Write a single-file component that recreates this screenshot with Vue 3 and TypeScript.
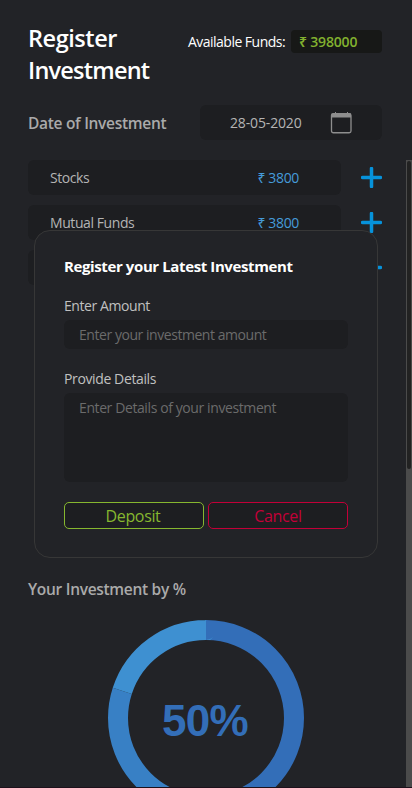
<script setup lang="ts">
interface Holding { id: number; name: string; amount: string }
interface Segment { percent: number; offset: number; color: string }

const holdings: Holding[] = [
  { id: 1, name: 'Stocks', amount: '₹ 3800' },
  { id: 2, name: 'Mutual Funds', amount: '₹ 3800' },
  { id: 3, name: '', amount: '' },
]
const segments: Segment[] = [
  { percent: 50, offset: 0, color: '#336eb8' },
  { percent: 30, offset: 50, color: '#3880c5' },
  { percent: 20, offset: 80, color: '#3e90d1' },
]
</script>

<template>
  <main class="page">
    <header class="top">
      <h1><span class="first-line">Register</span><br />Investment</h1>
      <div class="funds">
        <span class="funds-label">Available Funds:</span>
        <span class="funds-value">₹ 398000</span>
      </div>
    </header>

    <section class="date-row">
      <h2 class="date-title">Date of Investment</h2>
      <div class="date-box">
        <span class="date">28-05-2020</span>
        <svg class="calendar" width="22" height="22" viewBox="0 0 22 22">
          <rect x="1.5" y="1.75" width="19.5" height="19" rx="1.8" fill="none" stroke="#8e8e8e" stroke-width="1.3" />
          <path d="M1.5 1.5h19.5v4h-19.5zM5 0h1v3h-1zM17 0h1v3h-1z" fill="#8e8e8e" />
        </svg>
      </div>
    </section>

    <section class="scroll-area">
      <ul class="holdings">
        <li v-for="item in holdings" :key="item.id">
          <div class="holding">
            <span class="holding-name">{{ item.name }}</span>
            <span class="holding-value">{{ item.amount }}</span>
          </div>
          <svg class="plus" width="21" height="21" viewBox="0 0 21 21">
            <path d="M10.5 1.5v18M1.5 10.5h18" stroke="#0692db" stroke-width="3.5" stroke-linecap="round" />
          </svg>
        </li>
      </ul>
      <h2 class="chart-title">Your Investment by %</h2>
      <div class="chart">
        <svg width="196" height="196" viewBox="0 0 196 196">
          <g transform="rotate(-90 98 98)">
            <circle
              v-for="s in segments" :key="s.offset" cx="98" cy="98" r="88" fill="none" stroke-width="20"
              pathLength="100" :stroke="s.color" :stroke-dasharray="`${s.percent} ${100 - s.percent}`"
              :stroke-dashoffset="-s.offset"
            />
          </g>
        </svg>
        <span class="percent">50%</span>
      </div>
      <div class="track"><div class="thumb"></div></div>
    </section>

    <form class="modal" @submit.prevent>
      <h3>Register your Latest Investment</h3>
      <label for="amount" class="amount-label">Enter Amount</label>
      <input id="amount" placeholder="Enter your investment amount" />
      <label for="details" class="details-label">Provide Details</label>
      <textarea id="details" placeholder="Enter Details of your investment"></textarea>
      <div class="actions">
        <button class="deposit" type="submit">Deposit</button>
        <button class="cancel" type="button">Cancel</button>
      </div>
    </form>
  </main>
</template>

<style>
body { background: #222327; }
</style>

<style scoped>
* { box-sizing: border-box; }
h1, h2, h3, ul { margin: 0; padding: 0; }
.page {
  position: relative; height: 788px; overflow: hidden; background: #222327;
  border-bottom: 1px solid #1d111b; font-family: "Open Sans", "Noto Sans", sans-serif;
  font-size: 14px; color: #b4b4b4; white-space: nowrap;
}
.top { display: flex; justify-content: space-between; height: 105px; padding: 22px 30px 0 28px; }
h1 { font-size: 23.5px; line-height: 32px; font-weight: 600; color: #fff; letter-spacing: -0.78px; }
.first-line { letter-spacing: -0.45px; }
.funds { display: flex; height: 23px; margin-top: 8px; line-height: 23px; }
.funds-label { width: 103px; color: #fff; letter-spacing: -0.52px; }
.funds-value { width: 91px; padding-left: 8px; border-radius: 4px; background: #171817; color: #82b12f; font-weight: 600; letter-spacing: -0.18px; }
.date-row { display: flex; justify-content: space-between; align-items: center; height: 35px; padding: 0 30px 0 28px; }
h2 { font-size: 15.5px; line-height: 21px; font-weight: 600; color: #aaa; letter-spacing: -0.3px; }
.date-title { padding-top: 2px; }
.date-box { display: flex; width: 182px; height: 35px; padding-left: 30px; align-items: center; border-radius: 6px; background: #1d1e21; }
.date { width: 100px; letter-spacing: -0.15px; }
.scroll-area { position: relative; height: 627px; margin-top: 20px; overflow: hidden; }
.holdings { display: flex; flex-direction: column; gap: 10px; padding: 0 30px 0 28px; list-style: none; }
.holdings li { display: flex; justify-content: space-between; }
.holding { display: flex; width: 313px; height: 35px; padding: 0 42px 0 22px; justify-content: space-between; line-height: 36px; border-radius: 6px; background: #1d1e21; }
.holding-name { letter-spacing: -0.42px; }
.holding-value { color: #459bd9; letter-spacing: -0.35px; }
.plus { margin-top: 7px; }
.chart-title { margin: 294px 0 0 28px; }
.chart { display: grid; width: 196px; height: 196px; margin: 20px 0 0 108px; place-items: center; }
.chart > * { grid-area: 1 / 1; }
.percent { margin: 6px 2px 0 0; font: 700 44px/50px "Liberation Sans", Arial, sans-serif; letter-spacing: -0.7px; color: #336eb8; }
.track { position: absolute; top: 0; right: 0; width: 6px; height: 627px; background: #4b4b4b; }
.thumb { width: 4px; height: 308px; margin: 1px 0 0 1px; border-radius: 3px; background: #222; }
.modal { position: absolute; top: 230px; left: 34px; width: 344px; height: 328px; padding: 26px 29px; border: 1px solid #373737; border-radius: 16px; background: #222327; }
h3 { height: 20px; font-size: 15px; line-height: 19px; font-weight: 700; color: #fff; letter-spacing: -0.39px; }
label { display: block; height: 20px; line-height: 20px; color: #c0c0c0; letter-spacing: -0.42px; }
.amount-label { margin-top: 19px; }
.details-label { margin-top: 20px; letter-spacing: -0.38px; }
input, textarea { display: block; width: 284px; margin: 4px 0 0; padding: 0 15px; border: 0; border-radius: 6px; background: #1d1e21; font: inherit; color: #c0c0c0; resize: none; }
input { height: 29px; letter-spacing: -0.45px; }
textarea { height: 89px; padding-top: 5px; line-height: 20px; overflow: hidden; letter-spacing: -0.4px; }
input::placeholder, textarea::placeholder { color: #6b6b6b; opacity: 1; }
.actions { display: flex; gap: 4px; margin-top: 20px; }
button { width: 140px; height: 27px; padding: 2px 2px 0 0; border: 1px solid; border-radius: 5px; background: #1d1e21; font: 16px/23px "Open Sans", "Noto Sans", sans-serif; letter-spacing: -0.35px; }
.deposit { color: #86b72f; }
.cancel { padding-right: 0; color: #c30038; }
</style>
